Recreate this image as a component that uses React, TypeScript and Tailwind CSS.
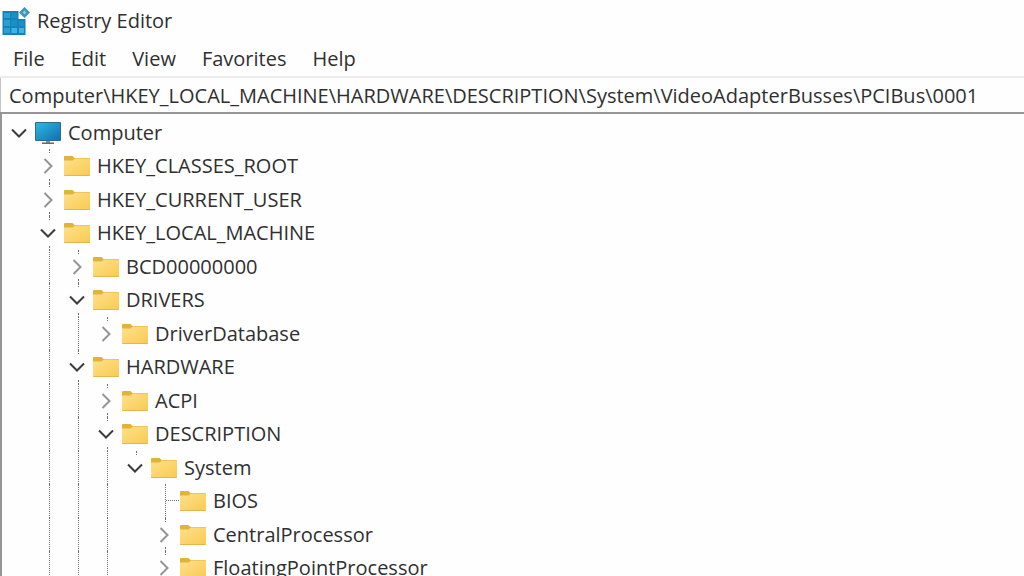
import { useState } from "react";

type Guide = "none" | "line";

type Entry = {
  name: string;
  icon?: "computer";
  state: "open" | "closed" | "leaf";
  guides: Guide[];
  last?: boolean;
};

const ENTRIES: Entry[] = [
  { name: "Computer", icon: "computer", state: "open", guides: [] },
  { name: "HKEY_CLASSES_ROOT", state: "closed", guides: ["none"] },
  { name: "HKEY_CURRENT_USER", state: "closed", guides: ["none"] },
  { name: "HKEY_LOCAL_MACHINE", state: "open", guides: ["none"] },
  { name: "BCD00000000", state: "closed", guides: ["none", "line"] },
  { name: "DRIVERS", state: "open", guides: ["none", "line"] },
  { name: "DriverDatabase", state: "closed", guides: ["none", "line", "line"], last: true },
  { name: "HARDWARE", state: "open", guides: ["none", "line"] },
  { name: "ACPI", state: "closed", guides: ["none", "line", "line"] },
  { name: "DESCRIPTION", state: "open", guides: ["none", "line", "line"] },
  { name: "System", state: "open", guides: ["none", "line", "line", "line"], last: true },
  { name: "BIOS", state: "leaf", guides: ["none", "line", "line", "line", "none"] },
  { name: "CentralProcessor", state: "closed", guides: ["none", "line", "line", "line", "none"] },
  { name: "FloatingPointProcessor", state: "closed", guides: ["none", "line", "line", "line", "none"] },
];

const MENUS = ["File", "Edit", "View", "Favorites", "Help"];

function RegistryIcon() {
  return (
    <svg viewBox="0 0 28 28" className="size-7 shrink-0" aria-hidden="true">
      <path d="M0.500 4h16v8h7v16h-23z" fill="#1583b8" />
      <path d="M2 6h6v5H2zM2 13h6v6H2zM2 21h6v5H2z" fill="#2b9fd4" />
      <path d="M9.500 6h5.500v5h-5.500zM9.500 13h5.500v6h-5.500zM17 14h5v5h-5z" fill="#1a90c9" />
      <path d="M9.500 21h5.500v5h-5.500zM17 21h5v5h-5z" fill="#3fb4e4" />
      <path d="M22.500 0l5.500 5.500-5.500 5.500L17 5.500z" fill="#3e93b8" />
      <path d="M22.500 3.500l2 2-2 2-2-2z" fill="#8acbe4" />
    </svg>
  );
}

function ComputerIcon() {
  return (
    <svg viewBox="0 0 26 22" className="h-[22px] w-[26px] shrink-0" aria-hidden="true">
      <defs>
        <linearGradient id="screen" x1="0" y1="0" x2="1" y2="1">
          <stop offset="0" stopColor="#2fb8d8" />
          <stop offset="1" stopColor="#0f70b8" />
        </linearGradient>
      </defs>
      <path d="M11 18h4v3h-4z" fill="#7f97a6" />
      <path d="M7 20.500h12v1.500H7z" fill="#5d6b75" />
      <rect x="0" y="0" width="26" height="19" rx="1" fill="#33688a" />
      <rect x="1" y="1" width="24" height="17" fill="url(#screen)" />
    </svg>
  );
}

function FolderIcon() {
  return (
    <svg viewBox="0 0 26 20" className="h-5 w-[26px] shrink-0" aria-hidden="true">
      <defs>
        <linearGradient id="folder" x1="0" y1="0" x2="1" y2="1">
          <stop offset="0" stopColor="#ffe08a" />
          <stop offset="1" stopColor="#f8ca52" />
        </linearGradient>
      </defs>
      <path d="M0 1a1 1 0 0 1 1-1h7.500l2 2H25a1 1 0 0 1 1 1v5H0z" fill="#e0b43a" />
      <path d="M0 4.500h8.500l2.500-2h14a1 1 0 0 1 1 1V19a1 1 0 0 1-1 1H1a1 1 0 0 1-1-1z" fill="url(#folder)" />
      <path d="M0 19h26a1 1 0 0 1-1 1H1a1 1 0 0 1-1-1z" fill="#e4b64a" />
    </svg>
  );
}

function Chevron({ open }: { open: boolean }) {
  return open ? (
    <svg viewBox="0 0 16 16" className="size-4" fill="none" stroke="#3c3c3c" strokeWidth="2" aria-hidden="true">
      <path d="M1 4.500l7 7 7-7" />
    </svg>
  ) : (
    <svg viewBox="0 0 16 16" className="size-4" fill="none" stroke="#959595" strokeWidth="2" aria-hidden="true">
      <path d="M4.500 1l7 7-7 7" />
    </svg>
  );
}

function Row({ entry }: { entry: Entry }) {
  const [open, setOpen] = useState(entry.state === "open");
  const root = entry.guides.length === 0;
  return (
    <li role="treeitem" className="flex items-stretch odd:h-[33px] even:h-[34px]">
      {entry.guides.map((guide, i) => (
        <span key={i} className="flex w-[29px] shrink-0 pl-[15px]">
          {guide === "line" && <span className="border-l border-dotted border-[#707070]" />}
        </span>
      ))}
      {entry.state === "leaf" ? (
        <span className="flex w-[29px] shrink-0">
          <span className="w-4 border-r border-dotted border-[#707070]" />
          <span className="h-1/2 flex-1 border-b border-dotted border-[#707070]" />
        </span>
      ) : (
        <span className="flex w-[29px] shrink-0 flex-col">
          <span className={root ? "h-1" : "ml-[15px] h-1 border-l border-dotted border-[#707070]"} />
          <button
            type="button"
            aria-label={`Toggle ${entry.name}`}
            onClick={() => setOpen(!open)}
            className="flex flex-1 items-center pl-[6px]"
          >
            <Chevron open={open} />
          </button>
          <span
            className={root || entry.last ? "h-1" : "ml-[15px] h-1 border-l border-dotted border-[#707070]"}
          />
        </span>
      )}
      <span className="flex items-center gap-[7px] pl-px">
        {entry.icon === "computer" ? <ComputerIcon /> : <FolderIcon />}
        <span className="whitespace-nowrap">{entry.name}</span>
      </span>
    </li>
  );
}

export default function App() {
  return (
    <div className="flex h-screen flex-col overflow-hidden bg-[#fefefe] font-['Open_Sans','Noto_Sans',sans-serif] text-[20px] leading-7 text-[#303030]">
      <header className="flex h-[42px] shrink-0 items-center gap-[7px] pl-[2px]">
        <RegistryIcon />
        <h1>Registry Editor</h1>
      </header>
      <nav className="flex h-[34px] shrink-0 items-center gap-[26px] pl-[13px]">
        {MENUS.map((name) => (
          <button key={name} type="button">
            {name}
          </button>
        ))}
      </nav>
      <div className="flex h-[38px] shrink-0 border-t-2 border-b-2 border-t-[#ececee] border-b-[#969696]">
        <input
          aria-label="Address"
          defaultValue="Computer\HKEY_LOCAL_MACHINE\HARDWARE\DESCRIPTION\System\VideoAdapterBusses\PCIBus\0001"
          className="w-full border-l border-[#c4c4c4] bg-transparent pt-[2px] pl-2 outline-none"
        />
      </div>
      <main className="min-h-0 flex-1 overflow-hidden border-l-2 border-[#969696] pt-[2px] pl-[3px]">
        <ul role="tree" aria-label="Registry keys">
          {ENTRIES.map((entry) => (
            <Row key={entry.name} entry={entry} />
          ))}
        </ul>
      </main>
    </div>
  );
}
